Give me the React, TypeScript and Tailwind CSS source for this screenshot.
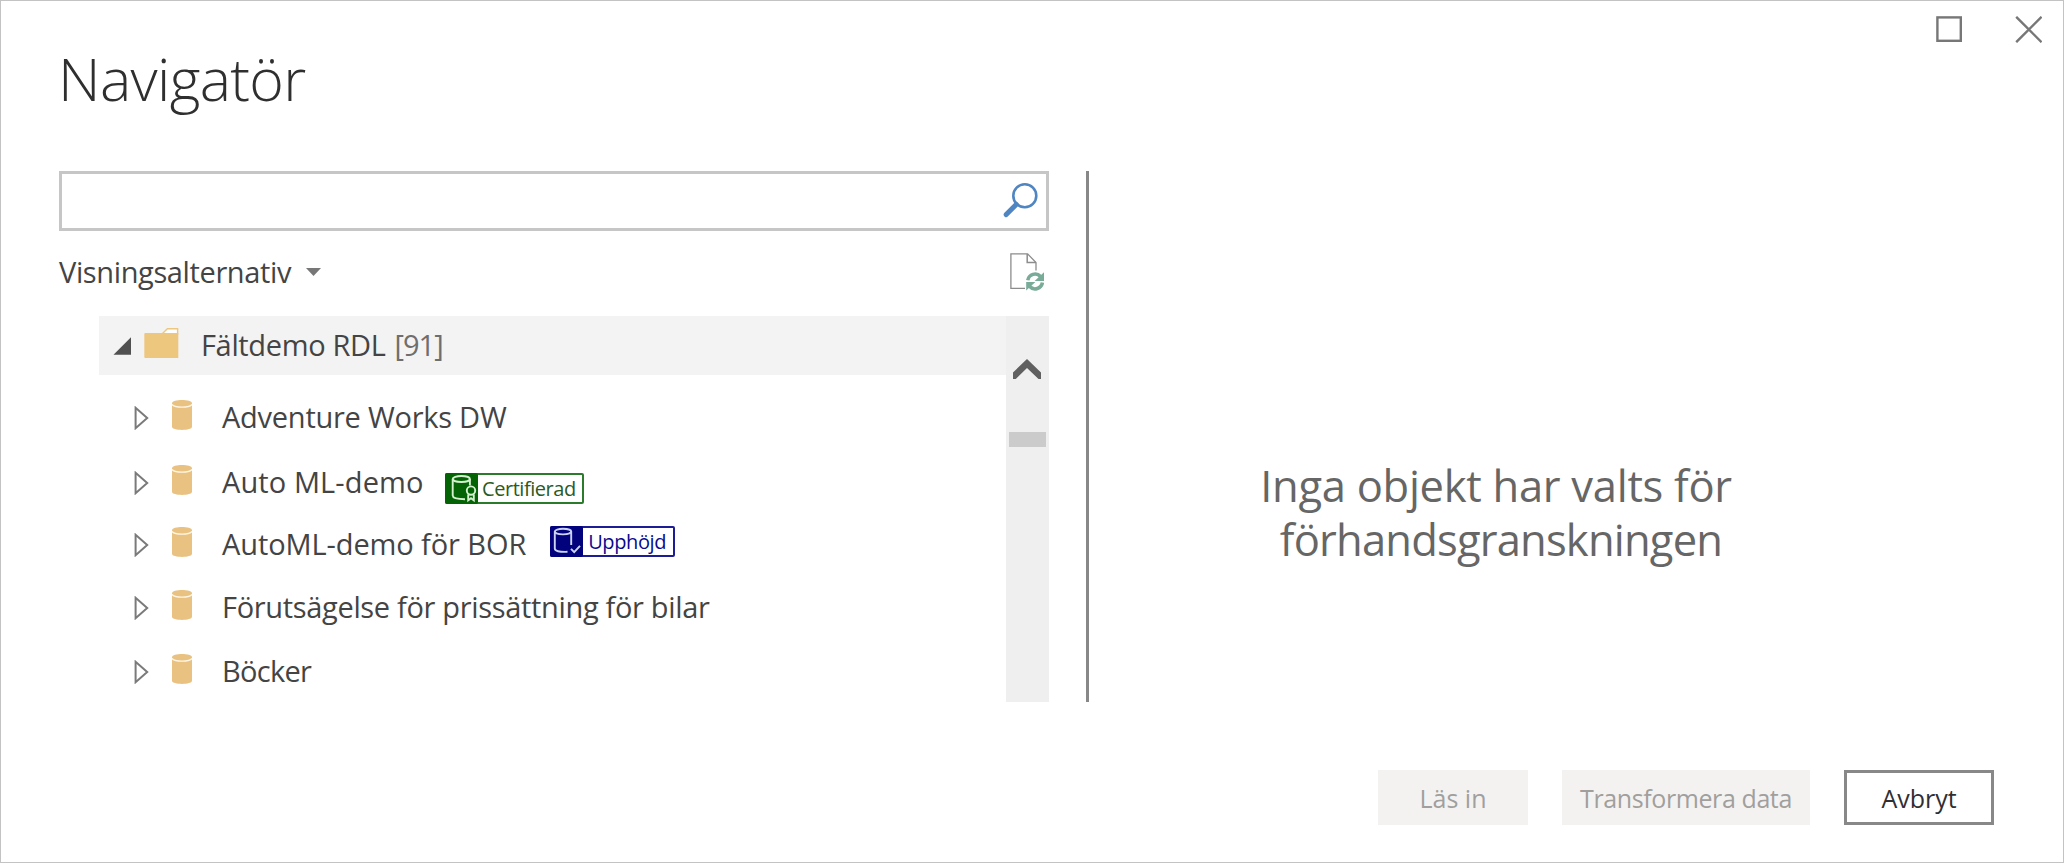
import type { ReactNode } from "react";

function SearchIcon() {
  return (
    <svg width="36" height="36" viewBox="0 0 36 36" fill="none" stroke="#4f86c2">
      <circle cx="22.8" cy="12.8" r="11.5" strokeWidth="2.6" />
      <path d="M14.2 21.4 L4.2 31.6" strokeWidth="5" strokeLinecap="round" />
    </svg>
  );
}

function RefreshDocIcon() {
  return (
    <svg width="34" height="38" viewBox="0 0 34 38" fill="none">
      <path d="M15 35.3 H0.9 V0.9 H17.6 L26 9.5 V17.5" stroke="#8c8c8c" strokeWidth="1.3" />
      <path d="M17.2 1 V9.6 H26" stroke="#8c8c8c" strokeWidth="1.5" />
      <g stroke="#78ab98" strokeWidth="3.6">
        <path d="M17.8 27.2 A 7.4 7.4 0 0 1 30.5 23.4" />
        <path d="M32.4 29.6 A 7.4 7.4 0 0 1 19.7 33.6" />
      </g>
      <path d="M34 19.2 V28 H24.6 Z" fill="#78ab98" />
      <path d="M16.2 37.6 V29 H25.4 Z" fill="#78ab98" />
    </svg>
  );
}

function FolderIcon() {
  return (
    <svg width="35" height="30" viewBox="0 0 35 30">
      <path d="M18 6 L23.4 0.7 H33.6 V6 Z" fill="#fff" stroke="#eec77e" strokeWidth="1.4" />
      <path d="M0.3 6 Q0.3 5 1.3 5 H34.3 V30 H1.3 Q0.3 30 0.3 29 Z" fill="#eec77e" />
    </svg>
  );
}

function DatabaseIcon() {
  return (
    <svg width="20" height="30" viewBox="0 0 20 30">
      <path d="M0 3.2 C0 -1 20 -1 20 3.2 V26.8 C20 31 0 31 0 26.8 Z" fill="#e9c282" />
      <path d="M0 4.3 C2 8 18 8 20 4.3" fill="none" stroke="#fff6e4" strokeWidth="1.4" />
    </svg>
  );
}

function CollapsedIcon() {
  return (
    <svg width="15" height="24" viewBox="0 0 15 24">
      <path d="M1.6 1.8 V22.2 L13.2 12 Z" fill="#fff" stroke="#7a7a7a" strokeWidth="2" />
    </svg>
  );
}

function CertifiedBadge() {
  return (
    <span className="flex h-[31px] w-[139px] items-center rounded-[2px] border-2 border-[#2c7a2c] bg-white">
      <svg className="-my-[2px] -ml-[2px] shrink-0" width="33" height="31" viewBox="0 0 33 31" fill="none" stroke="#d4f0cf" strokeWidth="1.9">
        <rect width="33" height="31" rx="2" fill="#046304" stroke="none" />
        <ellipse cx="16.3" cy="6" rx="8.6" ry="3" />
        <path d="M7.7 6 V22.5 C7.7 25 12 26.2 20 26.2 M24.9 6 V12.5" />
        <circle cx="26" cy="17.6" r="4.2" />
        <path d="M23.2 21.4 V27.4 L26 25.2 L28.8 27.4 V21.4" />
      </svg>
      <span className="pt-px pl-[4px] text-[20px] leading-[28px] tracking-[-0.45px] text-[#2b5a23]">Certifierad</span>
    </span>
  );
}

function PromotedBadge() {
  return (
    <span className="flex h-[31px] w-[125px] items-center rounded-[2px] border-2 border-[#1c1c94] bg-white">
      <svg className="-my-[2px] -ml-[2px] shrink-0" width="33" height="31" viewBox="0 0 33 31" fill="none" stroke="#ccd4f6" strokeWidth="1.9">
        <rect width="33" height="31" rx="2" fill="#02027c" stroke="none" />
        <ellipse cx="13" cy="5.6" rx="8.2" ry="2.8" />
        <path d="M4.8 5.6 V22.5 C4.8 25.2 9 26 17.5 25.8 M21.2 5.6 V19" />
        <path d="M21 22.8 L24.2 26.2 L30 19.8" />
      </svg>
      <span className="pt-px pl-[5px] text-[20px] leading-[28px] tracking-[-0.4px] text-[#0a0a90]">Upphöjd</span>
    </span>
  );
}

function TreeRow({ className, label, labelClass, children }: { className: string; label: string; labelClass: string; children?: ReactNode }) {
  return (
    <li className={`flex items-center pl-[35px] ${className}`}>
      <CollapsedIcon />
      <span className="mb-[5px] ml-[23px]">
        <DatabaseIcon />
      </span>
      <span className={`ml-[30px] pb-px text-[29px] leading-10 whitespace-nowrap text-[#444] ${labelClass}`}>{label}</span>
      {children}
    </li>
  );
}

export default function App() {
  return (
    <div className="flex h-[863px] w-[2064px] flex-col overflow-hidden border border-[#c3c3c3] bg-white font-['Open_Sans',sans-serif]">
      <header className="flex h-[170px] shrink-0 justify-between pt-[15px] pr-[21px] pl-[57px]">
        <h1 className="pt-[32px] text-[59px] leading-[60px] font-light tracking-[-0.65px] text-[#2f2f2f]">Navigatör</h1>
        <div className="flex h-[27px] gap-[52px]">
          <svg width="27" height="27" viewBox="0 0 27 27" fill="none" stroke="#777" strokeWidth="2.4">
            <rect x="1.4" y="1.4" width="23.4" height="23.4" />
          </svg>
          <svg width="27" height="27" viewBox="0 0 27 27" fill="none" stroke="#777" strokeWidth="2.4">
            <path d="M1.2 0.8 L26.6 26.2 M26.6 0.8 L1.2 26.2" />
          </svg>
        </div>
      </header>

      <main className="flex h-[531px] shrink-0 pl-[58px]">
        <section className="flex w-[990px] flex-col">
          <div className="flex h-[60px] shrink-0 items-start justify-end border-[3px] border-[#c6c6c6] pt-[9px] pr-[8px]">
            <SearchIcon />
          </div>
          <div className="mb-1 flex h-[81px] shrink-0 items-center justify-between pr-[5px]">
            <div className="flex items-center">
              <span className="text-[29px] leading-10 tracking-[-0.38px] text-[#444]">Visningsalternativ</span>
              <svg className="ml-[15px]" width="15" height="8" viewBox="0 0 15 8">
                <path d="M0 0 H15 L7.5 8 Z" fill="#777" />
              </svg>
            </div>
            <RefreshDocIcon />
          </div>
          <div className="flex h-[386px] pl-10">
            <div className="flex-1">
              <div className="flex h-[59px] items-center bg-[#f3f3f3] pl-[14px]">
                <svg width="18" height="18" viewBox="0 0 18 18">
                  <path d="M0.5 17.7 H18 V0.3 Z" fill="#505050" />
                </svg>
                <span className="mb-[5px] ml-[13px]">
                  <FolderIcon />
                </span>
                <span className="ml-[22px] pb-px text-[29px] leading-10 tracking-[-0.35px] text-[#444]">Fältdemo RDL</span>
                <span className="ml-[9px] pb-px text-[29px] leading-10 tracking-[-1px] text-[#6e6e6e]">[91]</span>
              </div>
              <ul className="pt-[10px]">
                <TreeRow className="h-[65px]" label="Adventure Works DW" labelClass="tracking-[-0.25px]" />
                <TreeRow className="h-[65px]" label="Auto ML-demo" labelClass="tracking-[0.1px]">
                  <span className="ml-[21.5px] pt-[11px]">
                    <CertifiedBadge />
                  </span>
                </TreeRow>
                <TreeRow className="h-[59px]" label="AutoML-demo för BOR" labelClass="tracking-[-0.1px]">
                  <span className="ml-[24px] pb-[6px]">
                    <PromotedBadge />
                  </span>
                </TreeRow>
                <TreeRow className="h-[67px]" label="Förutsägelse för prissättning för bilar" labelClass="tracking-[-0.33px]" />
                <TreeRow className="h-[61px]" label="Böcker" labelClass="tracking-[-0.7px]" />
              </ul>
            </div>
            <div className="flex w-[43px] flex-col items-center bg-[#efefef] pt-[43px]">
              <svg className="mr-px" width="28" height="20" viewBox="0 0 28 20">
                <path d="M0 13.5 L14 0 L28 13.5 V20 H25.5 L14 9 L2.8 20 H0 Z" fill="#606060" />
              </svg>
              <div className="mt-[53px] h-[15px] w-[37px] bg-[#cbcbcb]" />
            </div>
          </div>
        </section>

        <div className="ml-[37px] w-[3px] bg-[#888]" />

        <section className="flex w-[814px] flex-col items-center pt-[288px] text-[43.5px] leading-[54px] text-[#666]">
          <p className="tracking-[-0.28px]">Inga objekt har valts för</p>
          <p className="pl-[10px] tracking-[-0.8px]">förhandsgranskningen</p>
        </section>
      </main>

      <footer className="flex justify-end gap-[34px] pt-[68px] pr-[69px] text-[25px] leading-[34px]">
        <button className="h-[55px] w-[150px] bg-[#f3f2f1] text-[#a19f9d]">Läs in</button>
        <button className="h-[55px] w-[248px] bg-[#f3f2f1] tracking-[-0.4px] text-[#a19f9d]">Transformera data</button>
        <button className="h-[55px] w-[150px] border-[3px] border-[#888] bg-white text-[#2f2e33]">Avbryt</button>
      </footer>
    </div>
  );
}
